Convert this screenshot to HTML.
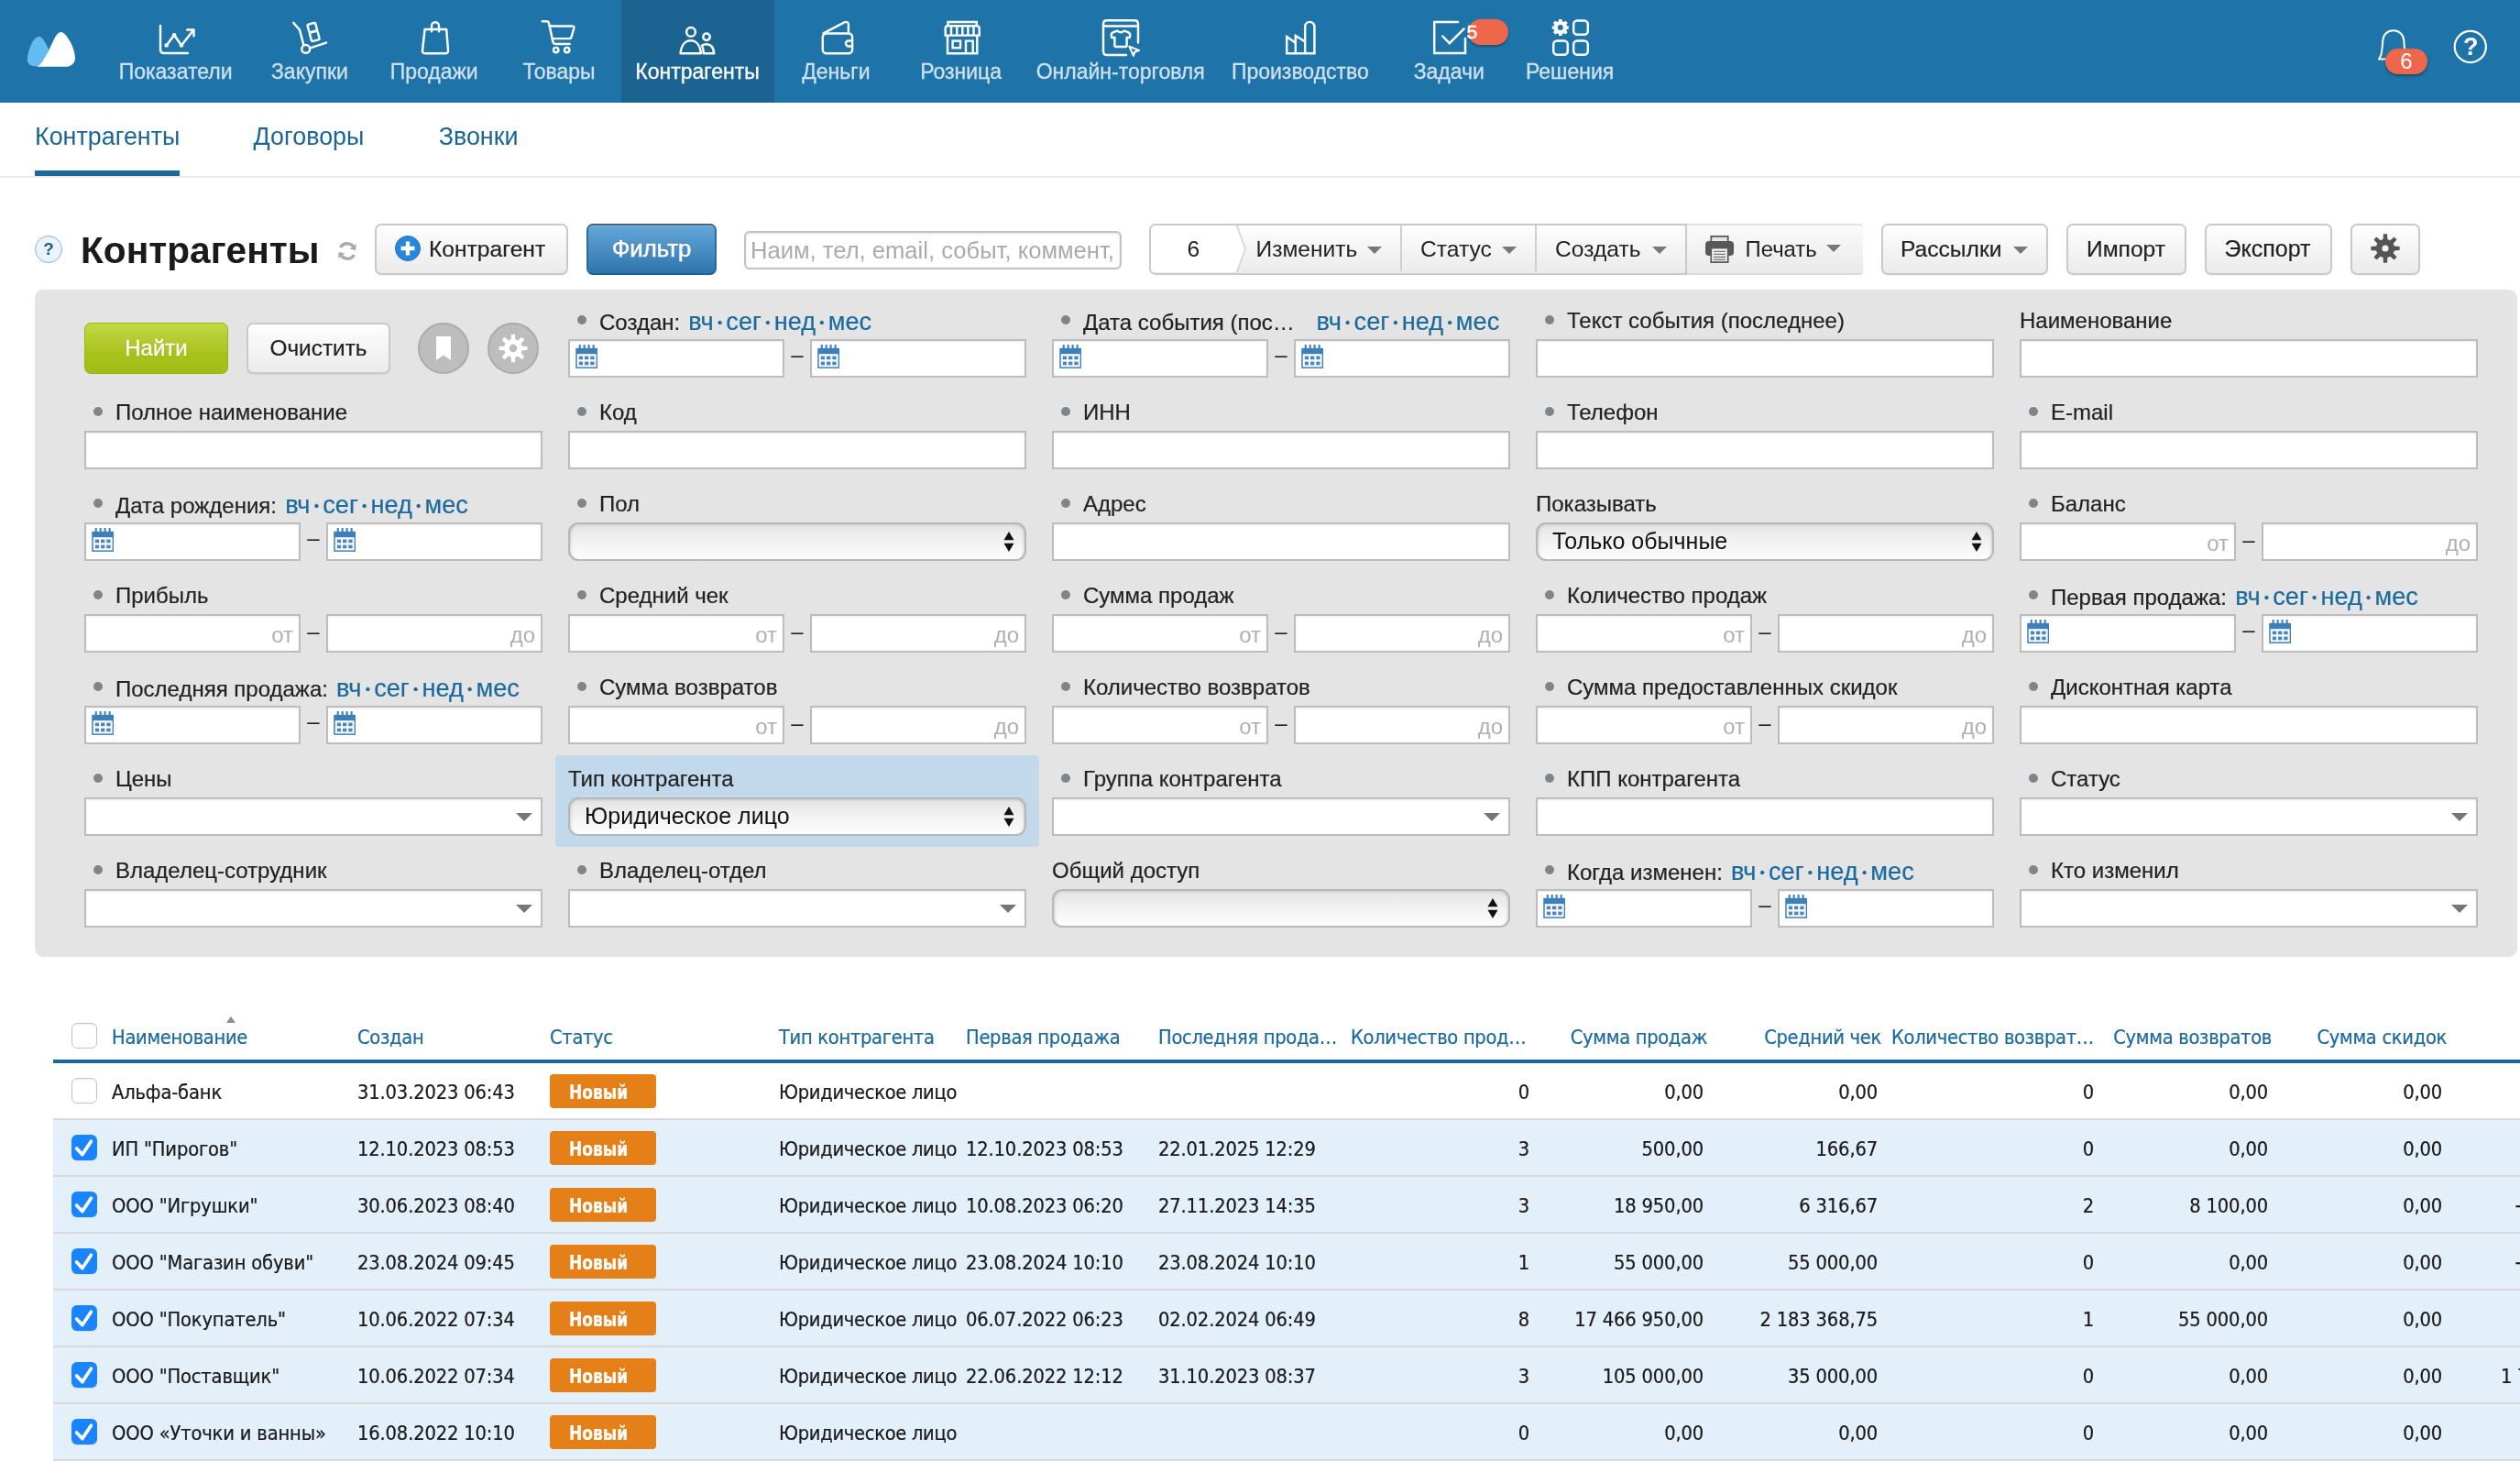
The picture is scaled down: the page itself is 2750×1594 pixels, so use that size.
<!DOCTYPE html><html lang="ru"><head><meta charset="utf-8"><title>Контрагенты</title><style>
html,body{margin:0;padding:0}
body{width:2750px;height:1594px;overflow:hidden;position:relative;background:#fff;font-family:"Liberation Sans","DejaVu Sans",sans-serif;color:#222;-webkit-font-smoothing:antialiased}
div,span,a{box-sizing:border-box}
#pg{position:absolute;left:0;top:0;width:2750px;height:1594px;overflow:hidden;will-change:transform}
.a{position:absolute;white-space:nowrap}
#nav{left:0;top:0;width:2750px;height:112px;background:#1e74a8}
.ni{position:absolute;top:0;height:112px}
.nl{position:absolute;top:63.7px;font-size:23px;line-height:28px;color:#cfe1ee;-webkit-text-stroke:.3px #cfe1ee;transform:translateX(-50%);white-space:nowrap}
.nl.act{color:#fff;-webkit-text-stroke:.3px #fff}
.ic{position:absolute;fill:none;stroke:#fff;stroke-width:2.6;stroke-linecap:round;stroke-linejoin:round;overflow:visible}
.sub{position:absolute;top:131.7px;font-size:26.9px;line-height:34px;color:#1b6595;white-space:nowrap}
.btn{position:absolute;-webkit-text-stroke:.2px;border:2px solid #c9c9c9;border-radius:7px;background:linear-gradient(#fefefe,#ebebeb);font-size:24.6px;color:#222;white-space:nowrap;box-shadow:0 1px 1px rgba(0,0,0,.05)}
.btn span.t{position:absolute;top:0;line-height:51px}
.car{position:absolute;width:0;height:0;border-left:8px solid transparent;border-right:8px solid transparent;border-top:8px solid #777}
#flt{left:38px;top:316px;width:2709px;height:728px;background:#e4e4e4;border-radius:9px}
.in{position:absolute;height:42px;background:#fff;border:2px solid #bdbdbd;box-shadow:inset 0 1px 2px rgba(0,0,0,.08)}
.lb{position:absolute;font-size:24px;line-height:30px;color:#222;white-space:nowrap;-webkit-text-stroke:.2px}
.bu{position:absolute;width:10px;height:10px;margin:0 0 0 .5px;border-radius:50%;background:#808588}
.sc{color:#1b6a9e;font-size:27.2px;line-height:30px;margin-left:2.5px}
.sc i{font-style:normal;font-size:15px;line-height:10px;position:relative;top:-3.5px;margin:0 4.2px}
.ph{position:absolute;font-size:24px;line-height:38px;color:#b0b0b0;top:2px}
.dash{position:absolute;font-size:24px;line-height:40px;color:#222;width:20px;text-align:center}
.sel{position:absolute;height:42px;border:2px solid #b7b7b7;border-radius:11px;background:linear-gradient(#e3e3e3,#f1f1f1 45%,#fdfdfd);box-shadow:inset 3px 0 3px -2px rgba(0,0,0,.14),inset -3px 0 3px -2px rgba(0,0,0,.14),inset 0 2px 2px rgba(0,0,0,.06);font-size:25px;line-height:37px;padding-left:16px;color:#111}
.cal{position:absolute;left:5.5px;top:3px}
.cmb{position:absolute;width:0;height:0;border-left:9px solid transparent;border-right:9px solid transparent;border-top:9px solid #777}
#tbl{font-family:"DejaVu Sans Condensed","DejaVu Sans","Liberation Sans",sans-serif;font-size:21.7px;letter-spacing:-0.3px;-webkit-text-stroke:.22px}
.th{position:absolute;top:1116.5px;line-height:30px;color:#1b6a9e;white-space:nowrap}
.td{position:absolute;line-height:30px;color:#1a1a1a;white-space:nowrap}
.r{transform:translateX(-100%)}
.n{letter-spacing:-0.14px}
.nm{letter-spacing:-0.15px}
.row{position:absolute;left:58px;width:2692px;height:62px;border-bottom:2px solid #d9d9d9}
.row.s{background:#e3f0fa}
.bd{position:absolute;left:600px;width:116px;height:37px;border-radius:4px;background:#e57f17;color:#fff;font-weight:bold;line-height:30px;font-size:21.7px;letter-spacing:0}
.bd span{position:absolute;left:20.5px;top:4.5px;display:inline-block;transform:scaleX(.875);transform-origin:0 0}
.cb{position:absolute;left:78px;width:28px;height:28px;border-radius:6px;border:1.5px solid #c4c4c4;background:#fff;box-shadow:inset 0 1px 2px rgba(0,0,0,.08)}
.cb.c{border:none;background:#1a85fa;box-shadow:0 1px 1px rgba(0,0,0,.08)}
</style></head><body><div id="pg">
<div id="nav" class="a">
<div class="a" style="left:678px;top:0;width:167px;height:112px;background:#1b6391"></div>
<span class="nl" style="left:191.6px">Показатели</span>
<span class="nl" style="left:337.9px">Закупки</span>
<span class="nl" style="left:473.7px">Продажи</span>
<span class="nl" style="left:610.0px">Товары</span>
<span class="nl act" style="left:761.0px">Контрагенты</span>
<span class="nl" style="left:912.4px">Деньги</span>
<span class="nl" style="left:1048.6px">Розница</span>
<span class="nl" style="left:1222.7px">Онлайн-торговля</span>
<span class="nl" style="left:1418.9px">Производство</span>
<span class="nl" style="left:1581.3px">Задачи</span>
<span class="nl" style="left:1713.1px">Решения</span>
<svg class="a" style="left:0;top:0" width="2750" height="112" viewBox="0 0 2750 112" fill="none" stroke="#fff" stroke-width="2.45" stroke-linecap="round" stroke-linejoin="round">
<g stroke="none">
<path fill="#62bbf3" d="M53.50 54.40 C53.12 53.67 52.00 51.48 51.20 50.00 C50.40 48.52 49.58 46.93 48.70 45.50 C47.82 44.07 46.88 42.32 45.90 41.40 C44.92 40.48 43.90 40.03 42.80 40.00 C41.70 39.97 40.36 40.48 39.30 41.20 C38.24 41.92 37.39 42.89 36.43 44.30 C35.47 45.71 34.49 47.38 33.55 49.64 C32.60 51.90 31.38 55.11 30.76 57.85 C30.15 60.59 29.94 64.43 29.86 66.07 C29.78 67.71 29.89 66.95 30.30 67.70 C30.71 68.45 31.42 69.88 32.30 70.60 C33.18 71.32 34.37 71.72 35.60 72.00 C36.83 72.28 38.47 72.53 39.70 72.30 C40.93 72.07 41.90 71.50 43.00 70.60 C44.10 69.70 45.35 68.20 46.30 66.90 C47.25 65.60 47.88 64.17 48.70 62.80 C49.52 61.43 50.40 60.10 51.20 58.70 C52.00 57.30 53.12 55.12 53.50 54.40 Z"/>
<path fill="#fff" d="M40.50 72.50 C40.92 72.18 42.03 71.53 43.00 70.60 C43.97 69.67 45.35 68.20 46.30 66.90 C47.25 65.60 47.88 64.17 48.70 62.80 C49.52 61.43 50.40 60.10 51.20 58.70 C52.00 57.30 52.75 55.92 53.50 54.40 C54.25 52.88 54.78 51.55 55.70 49.60 C56.62 47.65 57.97 44.62 59.00 42.70 C60.03 40.78 61.00 39.25 61.90 38.10 C62.80 36.95 63.62 36.30 64.40 35.80 C65.18 35.30 65.78 35.05 66.60 35.10 C67.42 35.15 68.30 35.38 69.30 36.10 C70.30 36.82 71.58 38.17 72.60 39.40 C73.62 40.63 74.45 41.93 75.40 43.50 C76.35 45.07 77.47 46.95 78.30 48.80 C79.13 50.65 79.85 52.75 80.40 54.60 C80.95 56.45 81.33 58.33 81.60 59.90 C81.87 61.47 82.13 62.63 82.00 64.00 C81.87 65.37 81.42 66.97 80.80 68.10 C80.18 69.23 79.33 70.08 78.30 70.80 C77.27 71.52 75.77 72.08 74.60 72.40 C73.43 72.72 71.85 72.65 71.30 72.70 L40.5 72.7 Z"/>
</g>
<!-- chart -->
<path d="M175 28V54Q175 58 179 58H205"/>
<path d="M181.7 49.5L190.1 38.2L198 49.5L211 33"/>
<path d="M204.3 32.4H211.5V39.2"/>
<g fill="#fff" stroke="none"><circle cx="181.7" cy="49.5" r="2.3"/><circle cx="190.1" cy="38.2" r="2.3"/><circle cx="198" cy="49.5" r="2.3"/></g>
<!-- trolley -->
<path d="M320.2 24.8L327 32.6L331.3 49"/>
<circle cx="333.7" cy="53.4" r="4.4"/>
<path d="M338.5 52.4L356 46.6"/>
<g transform="rotate(-15 342 35)"><rect x="337.6" y="25.5" width="9" height="9" rx="1.5"/><rect x="337.6" y="34.5" width="9" height="10" rx="1.5"/></g>
<!-- bag -->
<path d="M463.6 32H487.2L489 55Q489.2 58.3 486 58.3H464Q460.8 58.3 461 55Z"/>
<path d="M471 34.3V28.3A4 4 0 0 1 479 28.3V34.3"/>
<!-- cart -->
<path d="M591.8 23.3H596.5Q598.6 23.3 599 25.3L603.4 45.5Q604 48 606.5 48H621.7"/>
<path d="M599.8 28.4H624.3Q627 28.4 626.3 31L623.5 40.3Q623 42.1 621 42.1H602.8"/>
<circle cx="606.7" cy="54.6" r="2.7"/><circle cx="618.7" cy="54.6" r="2.7"/>
<!-- people -->
<circle cx="754" cy="34.9" r="4.9"/>
<path d="M742.6 58.2C743.5 49 748 44.3 753.8 44.3C759.6 44.3 764 49 764.9 58.2Z"/>
<circle cx="771" cy="40.2" r="3.7"/>
<path d="M767.7 58.2L767.6 56C767.4 53.5 766.8 51.3 765.9 49.7C767.3 48.8 769 48.3 771 48.3C775.5 48.3 778.6 52 779.3 58.2Z"/>
<!-- wallet -->
<rect x="897.8" y="36.5" width="32.3" height="21.8" rx="4"/>
<path d="M898.5 36.3L921.5 24.3Q925.8 22.8 925.9 27V36"/>
<path d="M930 44.4H926A3 3 0 0 0 926 50.4H930"/>
<!-- store -->
<g stroke-linecap="butt" stroke-linejoin="miter">
<path d="M1034.5 28.3V24H1065.8V28.3"/>
<path d="M1031.7 38.6V31Q1031.7 28.3 1034.5 28.3H1065.8Q1068.7 28.3 1068.7 31V38.6Z"/>
<path d="M1038 28.3V38.6M1044.2 28.3V38.6M1050.3 28.3V38.6M1056.4 28.3V38.6M1062.5 28.3V38.6"/>
<path d="M1034 38.6V58.2H1066.3V38.6"/>
<rect x="1039.6" y="44.6" width="8.4" height="7.6"/>
<path d="M1054 58.2V44.6H1061.7V58.2"/>
</g>
<!-- online -->
<path d="M1229 60H1208Q1204 60 1204 56V26.3Q1204 22.3 1208 22.3H1238Q1242 22.3 1242 26.3V46.5"/>
<path d="M1204 28.5H1242" stroke-linecap="butt"/>
<path d="M1219.3 33.6Q1223 37 1226.7 33.6L1231 35.2Q1233.6 36.4 1233.2 39L1232.8 41H1229.6V49.5Q1229.6 51 1228 51H1218Q1216.4 51 1216.4 49.5V41H1213.2L1212.8 39Q1212.4 36.4 1215 35.2Z"/>
<path d="M1232.3 50.6L1243 55L1238.2 56.8L1237 61Z" stroke-width="2"/>
<!-- factory -->
<g stroke-linecap="butt" stroke-linejoin="miter">
<path d="M1404.2 58.2V40L1413.8 46.8V39L1424.2 45.5"/>
<path d="M1413.8 46V58.2"/>
<path d="M1424.2 58.2V29A5.1 5.1 0 0 1 1434.4 29V58.2"/>
<path d="M1403 58.2H1435.6"/>
</g>
<!-- tasks -->
<path d="M1591 24H1565.2V58H1599V42" stroke-linejoin="miter"/>
<path d="M1574.2 39.5L1581.8 47.2L1597.6 31.3" stroke-linejoin="miter"/>
<!-- solutions -->
<rect x="1717.2" y="22.4" width="15.6" height="15.4" rx="4"/>
<rect x="1695.2" y="44.4" width="15.6" height="15.4" rx="4"/>
<rect x="1717.2" y="44.4" width="15.6" height="15.4" rx="4"/>
<g transform="translate(1702.8 30)" stroke="none" fill="#fff"><path fill-rule="evenodd" d="M-1.6 -9H1.6L2.2 -6.6L3.6 -6L5.8 -7.3L7.9 -5.1L6.5 -3L7 -1.7L9 -1.5V1.5L6.9 2L6.4 3.3L7.8 5.3L5.6 7.5L3.5 6.2L2.2 6.7L1.6 9H-1.6L-2.2 6.7L-3.5 6.2L-5.6 7.5L-7.8 5.3L-6.4 3.3L-6.9 2L-9 1.5V-1.5L-7 -1.7L-6.5 -3L-7.9 -5.1L-5.8 -7.3L-3.6 -6L-2.2 -6.6Z M0 -3A3 3 0 1 0 0 3A3 3 0 1 0 0 -3Z"/></g>
<!-- bell -->
<path d="M2596 64.6L2598 61C2599.5 56 2600 50 2600.3 44C2600.8 37.5 2605.5 33.2 2611.7 33.2C2618 33.2 2622.8 37.5 2623.3 44C2623.6 50 2624 56 2625.7 61L2627.5 64.6Z" stroke-width="2"/>
<!-- help -->
<circle cx="2695.8" cy="51" r="17.1" stroke-width="2.2"/>
</svg>
<div class="a" style="left:1602px;top:21px;width:44px;height:28px;border-radius:14px;background:#ee674a;box-shadow:0 2px 3px rgba(0,0,0,.3)"></div>
<span class="a" style="left:1600.5px;top:22px;font-size:21px;line-height:26px;color:#fff;-webkit-text-stroke:.6px #fff">5</span>
<div class="a" style="left:2603px;top:53px;width:46px;height:28px;border-radius:14px;background:#ee674a;box-shadow:0 2px 3px rgba(0,0,0,.35);color:#fff;font-size:24px;line-height:28px;text-align:center">6</div>
<span class="a" style="left:2688px;top:34px;font-size:27px;font-weight:bold;line-height:34px;color:#fff">?</span>

</div>
<span class="sub" style="left:38px">Контрагенты</span>
<span class="sub" style="left:276.5px">Договоры</span>
<span class="sub" style="left:478.7px">Звонки</span>
<div class="a" style="left:38px;top:186px;width:158px;height:6px;background:#1c6899"></div>
<div class="a" style="left:0;top:192px;width:2750px;height:2px;background:#e9e9e9"></div>
<div class="a" style="left:38px;top:257px;width:30px;height:30px;border-radius:50%;border:1.6px solid #7fb1d8;background:#eaf3fa;color:#1d5f94;font-size:19px;font-weight:bold;line-height:27px;text-align:center">?</div>
<div class="a" style="left:88px;top:249px;font-size:40.7px;font-weight:bold;line-height:48px;color:#1a1a1a">Контрагенты</div>
<svg class="a" style="left:367px;top:262px" width="24" height="24" viewBox="0 0 24 24" fill="none" stroke="#a9a9a9" stroke-width="3.4"><path d="M20 10 A8.5 8.5 0 0 0 4.5 8"/><path d="M4 14 A8.5 8.5 0 0 0 19.5 16"/><path d="M22 4 L21 11 L14.5 9.5Z" fill="#a9a9a9" stroke="none"/><path d="M2 20 L3 13 L9.5 14.5Z" fill="#a9a9a9" stroke="none"/></svg>
<div class="btn" style="left:409px;top:244px;width:211px;height:56px"><svg class="a" style="left:20px;top:11px" width="28" height="28" viewBox="0 0 30 30"><circle cx="15" cy="15" r="14.5" fill="#2a86d8"/><circle cx="15" cy="15" r="14.5" fill="none" stroke="#1f6fc0" stroke-width="1"/><path d="M15 7V23M7 15H23" stroke="#fff" stroke-width="4.6"/></svg><span class="t" style="left:57px">Контрагент</span></div>
<div class="a" style="left:640px;top:244px;width:142px;height:56px;border-radius:7px;border:2px solid;border-color:#4f6272 #2a6da3 #1d5f92;background:linear-gradient(#64a6d8,#4a8fc4 50%,#2d75ac);box-shadow:inset 0 1px 0 rgba(255,255,255,.2);color:#fff;font-size:25.8px;line-height:50px;text-align:center;-webkit-text-stroke:.5px #fff;text-shadow:0 -1px 1px rgba(0,0,0,.25)">Фильтр</div>
<div class="a" style="left:812px;top:252px;width:412px;height:42px;border:2px solid #c2c2c2;border-radius:6px;background:#fff;box-shadow:inset 0 1px 3px rgba(0,0,0,.12);overflow:hidden"><span class="a" style="left:5px;top:0;font-size:25.6px;line-height:39px;color:#aaa">Наим, тел, email, событ, коммент,</span></div>
<div class="a" style="left:1254px;top:244px;width:587px;height:56px;border:2px solid #c9c9c9;border-radius:7px 0 0 7px;background:linear-gradient(#fefefe,#ebebeb);overflow:hidden"><svg class="a" style="left:0;top:0" width="110" height="51" viewBox="0 0 110 51"><path d="M-2 -2H93L103 25.5L93 53H-2Z" fill="#fff" stroke="#d9d9d9" stroke-width="2"/></svg><span class="a" style="left:39.5px;top:0;font-size:24.6px;line-height:51px">6</span><span class="a" style="left:114.5px;top:0;font-size:24.6px;line-height:51px">Изменить</span><span class="car" style="left:236px;top:23px"></span><div class="a" style="left:272px;top:0;width:2px;height:50px;background:#cfcfcf"></div><span class="a" style="left:294px;top:0;font-size:24.6px;line-height:51px">Статус</span><span class="car" style="left:383px;top:23px"></span><div class="a" style="left:419px;top:0;width:2px;height:50px;background:#cfcfcf"></div><span class="a" style="left:441px;top:0;font-size:24.6px;line-height:51px">Создать</span><span class="car" style="left:547px;top:23px"></span></div>
<div class="a" style="left:1841px;top:244px;width:192px;height:56px;border-radius:0 4px 4px 0;background:linear-gradient(#fbfbfb,#e9e9e9);border-top:2px solid #e2e2e2;border-bottom:2px solid #dcdcdc"><svg class="a" style="left:20.3px;top:11px" width="31" height="30" viewBox="0 0 31 30"><rect x="6.3" y="0.9" width="18.4" height="8" fill="#e6e6e6" stroke="#5a5a5a" stroke-width="1.8"/><rect x="0" y="6" width="31" height="16" rx="4" fill="#585858"/><rect x="6.3" y="13.5" width="18.4" height="15.6" fill="#f2f2f2" stroke="#5a5a5a" stroke-width="1.8"/><path d="M9 17.3H22M9 20.4H22M9 23.5H22M9 26.4H22" stroke="#777" stroke-width="1.3"/></svg><span class="a" style="left:63.5px;top:0px;font-size:23.9px;line-height:51px">Печать</span><span class="car" style="left:152px;top:21px"></span></div>
<div class="btn" style="left:2053px;top:244px;width:182px;height:56px"><span class="t" style="left:19px">Рассылки</span><span class="car" style="left:142px;top:23px"></span></div>
<div class="btn" style="left:2255px;top:244px;width:131px;height:56px"><span class="t" style="left:20px">Импорт</span></div>
<div class="btn" style="left:2406px;top:244px;width:139px;height:56px"><span class="t" style="left:19.5px;font-size:25px">Экспорт</span></div>
<div class="btn" style="left:2565px;top:244px;width:76px;height:56px"><svg class="a" style="left:20px;top:9px" width="32" height="32" viewBox="-16 -16 32 32"><path fill="#555" fill-rule="evenodd" d="M-2.38 -9.92 L-2.10 -15.66 L2.10 -15.66 L2.38 -9.92 L5.33 -8.70 L9.59 -12.56 L12.56 -9.59 L8.70 -5.33 L9.92 -2.38 L15.66 -2.10 L15.66 2.10 L9.92 2.38 L8.70 5.33 L12.56 9.59 L9.59 12.56 L5.33 8.70 L2.38 9.92 L2.10 15.66 L-2.10 15.66 L-2.38 9.92 L-5.33 8.70 L-9.59 12.56 L-12.56 9.59 L-8.70 5.33 L-9.92 2.38 L-15.66 2.10 L-15.66 -2.10 L-9.92 -2.38 L-8.70 -5.33 L-12.56 -9.59 L-9.59 -12.56 L-5.33 -8.70Z M0 -3.60 A3.60 3.60 0 1 0 0 3.60 A3.60 3.60 0 1 0 0 -3.60 Z"/></svg></div>
<div id="flt" class="a">
<div class="a" style="left:568px;top:508px;width:528px;height:100px;background:#c1d9ea;border-radius:4px"></div>
<div class="a" style="left:54px;top:36px;width:157px;height:56px;border-radius:7px;border:1px solid #9ab51c;background:linear-gradient(#c3d845,#a8c21c 60%,#a3bd17);color:#fff;font-size:24px;line-height:54px;text-align:center;text-shadow:0 1px 1px rgba(0,0,0,.2);-webkit-text-stroke:.3px #fff">Найти</div>
<div class="btn" style="left:231px;top:36px;width:157px;height:56px"><span class="t" style="left:0;width:153px;text-align:center;line-height:52px;font-size:24.4px">Очистить</span></div>
<div class="a" style="left:418px;top:36px;width:56px;height:56px;border-radius:50%;background:#bdbdbd;border:2px solid #ababab"><svg class="a" style="left:18px;top:13px" width="16" height="26" viewBox="0 0 16 26"><path d="M0 0H16V26L8 20.4L0 26Z" fill="#fff"/></svg></div>
<div class="a" style="left:494px;top:36px;width:56px;height:56px;border-radius:50%;background:#bdbdbd;border:2px solid #ababab"><svg class="a" style="left:10px;top:10px" width="32" height="32" viewBox="-16 -16 32 32"><path fill="#fff" fill-rule="evenodd" d="M-2.33 -9.72 L-2.06 -15.36 L2.06 -15.36 L2.33 -9.72 L5.22 -8.53 L9.40 -12.32 L12.32 -9.40 L8.53 -5.22 L9.72 -2.33 L15.36 -2.06 L15.36 2.06 L9.72 2.33 L8.53 5.22 L12.32 9.40 L9.40 12.32 L5.22 8.53 L2.33 9.72 L2.06 15.36 L-2.06 15.36 L-2.33 9.72 L-5.22 8.53 L-9.40 12.32 L-12.32 9.40 L-8.53 5.22 L-9.72 2.33 L-15.36 2.06 L-15.36 -2.06 L-9.72 -2.33 L-8.53 -5.22 L-12.32 -9.40 L-9.40 -12.32 L-5.22 -8.53Z M0 -4.20 A4.20 4.20 0 1 0 0 4.20 A4.20 4.20 0 1 0 0 -4.20 Z"/></svg></div>
<span class="bu" style="left:591px;top:28px"></span>
<span class="lb" style="left:616px;top:20px">Создан: <span class="sc">вч<i>•</i>сег<i>•</i>нед<i>•</i>мес</span></span>
<div class="in" style="left:582px;top:54px;width:236px"><svg class="cal" width="24.4" height="28" viewBox="0 0 26 30"><rect x="1" y="6" width="24" height="22" fill="#fff" stroke="#3f7fb8" stroke-width="1.6"/><rect x="1" y="6" width="24" height="6" fill="#3f7fb8"/><path d="M5 1V8M10.3 1V8M15.6 1V8M21 1V8" stroke="#3f7fb8" stroke-width="2.2"/><g fill="#4a86bc"><rect x="4" y="14.5" width="4.6" height="4"/><rect x="10.7" y="14.5" width="4.6" height="4"/><rect x="17.4" y="14.5" width="4.6" height="4"/><rect x="4" y="21" width="4.6" height="4"/><rect x="10.7" y="21" width="4.6" height="4"/><rect x="17.4" y="21" width="4.6" height="4"/></g></svg></div>
<span class="dash" style="left:822px;top:50.7px">–</span>
<div class="in" style="left:846px;top:54px;width:236px"><svg class="cal" width="24.4" height="28" viewBox="0 0 26 30"><rect x="1" y="6" width="24" height="22" fill="#fff" stroke="#3f7fb8" stroke-width="1.6"/><rect x="1" y="6" width="24" height="6" fill="#3f7fb8"/><path d="M5 1V8M10.3 1V8M15.6 1V8M21 1V8" stroke="#3f7fb8" stroke-width="2.2"/><g fill="#4a86bc"><rect x="4" y="14.5" width="4.6" height="4"/><rect x="10.7" y="14.5" width="4.6" height="4"/><rect x="17.4" y="14.5" width="4.6" height="4"/><rect x="4" y="21" width="4.6" height="4"/><rect x="10.7" y="21" width="4.6" height="4"/><rect x="17.4" y="21" width="4.6" height="4"/></g></svg></div>
<span class="bu" style="left:1119px;top:28px"></span>
<span class="lb" style="left:1144px;top:21px">Дата события (пос…</span>
<span class="lb" style="left:1396px;top:20px"><span class="sc">вч<i>•</i>сег<i>•</i>нед<i>•</i>мес</span></span>
<div class="in" style="left:1110px;top:54px;width:236px"><svg class="cal" width="24.4" height="28" viewBox="0 0 26 30"><rect x="1" y="6" width="24" height="22" fill="#fff" stroke="#3f7fb8" stroke-width="1.6"/><rect x="1" y="6" width="24" height="6" fill="#3f7fb8"/><path d="M5 1V8M10.3 1V8M15.6 1V8M21 1V8" stroke="#3f7fb8" stroke-width="2.2"/><g fill="#4a86bc"><rect x="4" y="14.5" width="4.6" height="4"/><rect x="10.7" y="14.5" width="4.6" height="4"/><rect x="17.4" y="14.5" width="4.6" height="4"/><rect x="4" y="21" width="4.6" height="4"/><rect x="10.7" y="21" width="4.6" height="4"/><rect x="17.4" y="21" width="4.6" height="4"/></g></svg></div>
<span class="dash" style="left:1350px;top:50.7px">–</span>
<div class="in" style="left:1374px;top:54px;width:236px"><svg class="cal" width="24.4" height="28" viewBox="0 0 26 30"><rect x="1" y="6" width="24" height="22" fill="#fff" stroke="#3f7fb8" stroke-width="1.6"/><rect x="1" y="6" width="24" height="6" fill="#3f7fb8"/><path d="M5 1V8M10.3 1V8M15.6 1V8M21 1V8" stroke="#3f7fb8" stroke-width="2.2"/><g fill="#4a86bc"><rect x="4" y="14.5" width="4.6" height="4"/><rect x="10.7" y="14.5" width="4.6" height="4"/><rect x="17.4" y="14.5" width="4.6" height="4"/><rect x="4" y="21" width="4.6" height="4"/><rect x="10.7" y="21" width="4.6" height="4"/><rect x="17.4" y="21" width="4.6" height="4"/></g></svg></div>
<span class="bu" style="left:1647px;top:28px"></span>
<span class="lb" style="left:1672px;top:19px">Текст события (последнее)</span>
<div class="in" style="left:1638px;top:54px;width:500px"></div>
<span class="lb" style="left:2166px;top:19px">Наименование</span>
<div class="in" style="left:2166px;top:54px;width:500px"></div>
<span class="bu" style="left:63px;top:128px"></span>
<span class="lb" style="left:88px;top:119px">Полное наименование</span>
<div class="in" style="left:54px;top:154px;width:500px"></div>
<span class="bu" style="left:591px;top:128px"></span>
<span class="lb" style="left:616px;top:119px">Код</span>
<div class="in" style="left:582px;top:154px;width:500px"></div>
<span class="bu" style="left:1119px;top:128px"></span>
<span class="lb" style="left:1144px;top:119px">ИНН</span>
<div class="in" style="left:1110px;top:154px;width:500px"></div>
<span class="bu" style="left:1647px;top:128px"></span>
<span class="lb" style="left:1672px;top:119px">Телефон</span>
<div class="in" style="left:1638px;top:154px;width:500px"></div>
<span class="bu" style="left:2175px;top:128px"></span>
<span class="lb" style="left:2200px;top:119px">E-mail</span>
<div class="in" style="left:2166px;top:154px;width:500px"></div>
<span class="bu" style="left:63px;top:228px"></span>
<span class="lb" style="left:88px;top:220px">Дата рождения: <span class="sc">вч<i>•</i>сег<i>•</i>нед<i>•</i>мес</span></span>
<div class="in" style="left:54px;top:254px;width:236px"><svg class="cal" width="24.4" height="28" viewBox="0 0 26 30"><rect x="1" y="6" width="24" height="22" fill="#fff" stroke="#3f7fb8" stroke-width="1.6"/><rect x="1" y="6" width="24" height="6" fill="#3f7fb8"/><path d="M5 1V8M10.3 1V8M15.6 1V8M21 1V8" stroke="#3f7fb8" stroke-width="2.2"/><g fill="#4a86bc"><rect x="4" y="14.5" width="4.6" height="4"/><rect x="10.7" y="14.5" width="4.6" height="4"/><rect x="17.4" y="14.5" width="4.6" height="4"/><rect x="4" y="21" width="4.6" height="4"/><rect x="10.7" y="21" width="4.6" height="4"/><rect x="17.4" y="21" width="4.6" height="4"/></g></svg></div>
<span class="dash" style="left:294px;top:250.7px">–</span>
<div class="in" style="left:318px;top:254px;width:236px"><svg class="cal" width="24.4" height="28" viewBox="0 0 26 30"><rect x="1" y="6" width="24" height="22" fill="#fff" stroke="#3f7fb8" stroke-width="1.6"/><rect x="1" y="6" width="24" height="6" fill="#3f7fb8"/><path d="M5 1V8M10.3 1V8M15.6 1V8M21 1V8" stroke="#3f7fb8" stroke-width="2.2"/><g fill="#4a86bc"><rect x="4" y="14.5" width="4.6" height="4"/><rect x="10.7" y="14.5" width="4.6" height="4"/><rect x="17.4" y="14.5" width="4.6" height="4"/><rect x="4" y="21" width="4.6" height="4"/><rect x="10.7" y="21" width="4.6" height="4"/><rect x="17.4" y="21" width="4.6" height="4"/></g></svg></div>
<span class="bu" style="left:591px;top:228px"></span>
<span class="lb" style="left:616px;top:219px">Пол</span>
<div class="sel" style="left:582px;top:254px;width:500px"><svg class="a" style="right:11px;top:8px" width="12" height="22" viewBox="0 0 12 22"><path d="M6 0L11.5 9.3H.5Z M6 22L11.5 12.7H.5Z" fill="#111"/></svg></div>
<span class="bu" style="left:1119px;top:228px"></span>
<span class="lb" style="left:1144px;top:219px">Адрес</span>
<div class="in" style="left:1110px;top:254px;width:500px"></div>
<span class="lb" style="left:1638px;top:219px">Показывать</span>
<div class="sel" style="left:1638px;top:254px;width:500px">Только обычные<svg class="a" style="right:11px;top:8px" width="12" height="22" viewBox="0 0 12 22"><path d="M6 0L11.5 9.3H.5Z M6 22L11.5 12.7H.5Z" fill="#111"/></svg></div>
<span class="bu" style="left:2175px;top:228px"></span>
<span class="lb" style="left:2200px;top:219px">Баланс</span>
<div class="in" style="left:2166px;top:254px;width:236px"><span class="ph" style="right:6px">от</span></div>
<span class="dash" style="left:2406px;top:253.0px">–</span>
<div class="in" style="left:2430px;top:254px;width:236px"><span class="ph" style="right:6px">до</span></div>
<span class="bu" style="left:63px;top:328px"></span>
<span class="lb" style="left:88px;top:319px">Прибыль</span>
<div class="in" style="left:54px;top:354px;width:236px"><span class="ph" style="right:6px">от</span></div>
<span class="dash" style="left:294px;top:353.0px">–</span>
<div class="in" style="left:318px;top:354px;width:236px"><span class="ph" style="right:6px">до</span></div>
<span class="bu" style="left:591px;top:328px"></span>
<span class="lb" style="left:616px;top:319px">Средний чек</span>
<div class="in" style="left:582px;top:354px;width:236px"><span class="ph" style="right:6px">от</span></div>
<span class="dash" style="left:822px;top:353.0px">–</span>
<div class="in" style="left:846px;top:354px;width:236px"><span class="ph" style="right:6px">до</span></div>
<span class="bu" style="left:1119px;top:328px"></span>
<span class="lb" style="left:1144px;top:319px">Сумма продаж</span>
<div class="in" style="left:1110px;top:354px;width:236px"><span class="ph" style="right:6px">от</span></div>
<span class="dash" style="left:1350px;top:353.0px">–</span>
<div class="in" style="left:1374px;top:354px;width:236px"><span class="ph" style="right:6px">до</span></div>
<span class="bu" style="left:1647px;top:328px"></span>
<span class="lb" style="left:1672px;top:319px">Количество продаж</span>
<div class="in" style="left:1638px;top:354px;width:236px"><span class="ph" style="right:6px">от</span></div>
<span class="dash" style="left:1878px;top:353.0px">–</span>
<div class="in" style="left:1902px;top:354px;width:236px"><span class="ph" style="right:6px">до</span></div>
<span class="bu" style="left:2175px;top:328px"></span>
<span class="lb" style="left:2200px;top:320px">Первая продажа: <span class="sc">вч<i>•</i>сег<i>•</i>нед<i>•</i>мес</span></span>
<div class="in" style="left:2166px;top:354px;width:236px"><svg class="cal" width="24.4" height="28" viewBox="0 0 26 30"><rect x="1" y="6" width="24" height="22" fill="#fff" stroke="#3f7fb8" stroke-width="1.6"/><rect x="1" y="6" width="24" height="6" fill="#3f7fb8"/><path d="M5 1V8M10.3 1V8M15.6 1V8M21 1V8" stroke="#3f7fb8" stroke-width="2.2"/><g fill="#4a86bc"><rect x="4" y="14.5" width="4.6" height="4"/><rect x="10.7" y="14.5" width="4.6" height="4"/><rect x="17.4" y="14.5" width="4.6" height="4"/><rect x="4" y="21" width="4.6" height="4"/><rect x="10.7" y="21" width="4.6" height="4"/><rect x="17.4" y="21" width="4.6" height="4"/></g></svg></div>
<span class="dash" style="left:2406px;top:350.7px">–</span>
<div class="in" style="left:2430px;top:354px;width:236px"><svg class="cal" width="24.4" height="28" viewBox="0 0 26 30"><rect x="1" y="6" width="24" height="22" fill="#fff" stroke="#3f7fb8" stroke-width="1.6"/><rect x="1" y="6" width="24" height="6" fill="#3f7fb8"/><path d="M5 1V8M10.3 1V8M15.6 1V8M21 1V8" stroke="#3f7fb8" stroke-width="2.2"/><g fill="#4a86bc"><rect x="4" y="14.5" width="4.6" height="4"/><rect x="10.7" y="14.5" width="4.6" height="4"/><rect x="17.4" y="14.5" width="4.6" height="4"/><rect x="4" y="21" width="4.6" height="4"/><rect x="10.7" y="21" width="4.6" height="4"/><rect x="17.4" y="21" width="4.6" height="4"/></g></svg></div>
<span class="bu" style="left:63px;top:428px"></span>
<span class="lb" style="left:88px;top:420px">Последняя продажа: <span class="sc">вч<i>•</i>сег<i>•</i>нед<i>•</i>мес</span></span>
<div class="in" style="left:54px;top:454px;width:236px"><svg class="cal" width="24.4" height="28" viewBox="0 0 26 30"><rect x="1" y="6" width="24" height="22" fill="#fff" stroke="#3f7fb8" stroke-width="1.6"/><rect x="1" y="6" width="24" height="6" fill="#3f7fb8"/><path d="M5 1V8M10.3 1V8M15.6 1V8M21 1V8" stroke="#3f7fb8" stroke-width="2.2"/><g fill="#4a86bc"><rect x="4" y="14.5" width="4.6" height="4"/><rect x="10.7" y="14.5" width="4.6" height="4"/><rect x="17.4" y="14.5" width="4.6" height="4"/><rect x="4" y="21" width="4.6" height="4"/><rect x="10.7" y="21" width="4.6" height="4"/><rect x="17.4" y="21" width="4.6" height="4"/></g></svg></div>
<span class="dash" style="left:294px;top:450.7px">–</span>
<div class="in" style="left:318px;top:454px;width:236px"><svg class="cal" width="24.4" height="28" viewBox="0 0 26 30"><rect x="1" y="6" width="24" height="22" fill="#fff" stroke="#3f7fb8" stroke-width="1.6"/><rect x="1" y="6" width="24" height="6" fill="#3f7fb8"/><path d="M5 1V8M10.3 1V8M15.6 1V8M21 1V8" stroke="#3f7fb8" stroke-width="2.2"/><g fill="#4a86bc"><rect x="4" y="14.5" width="4.6" height="4"/><rect x="10.7" y="14.5" width="4.6" height="4"/><rect x="17.4" y="14.5" width="4.6" height="4"/><rect x="4" y="21" width="4.6" height="4"/><rect x="10.7" y="21" width="4.6" height="4"/><rect x="17.4" y="21" width="4.6" height="4"/></g></svg></div>
<span class="bu" style="left:591px;top:428px"></span>
<span class="lb" style="left:616px;top:419px">Сумма возвратов</span>
<div class="in" style="left:582px;top:454px;width:236px"><span class="ph" style="right:6px">от</span></div>
<span class="dash" style="left:822px;top:453.0px">–</span>
<div class="in" style="left:846px;top:454px;width:236px"><span class="ph" style="right:6px">до</span></div>
<span class="bu" style="left:1119px;top:428px"></span>
<span class="lb" style="left:1144px;top:419px">Количество возвратов</span>
<div class="in" style="left:1110px;top:454px;width:236px"><span class="ph" style="right:6px">от</span></div>
<span class="dash" style="left:1350px;top:453.0px">–</span>
<div class="in" style="left:1374px;top:454px;width:236px"><span class="ph" style="right:6px">до</span></div>
<span class="bu" style="left:1647px;top:428px"></span>
<span class="lb" style="left:1672px;top:419px">Сумма предоставленных скидок</span>
<div class="in" style="left:1638px;top:454px;width:236px"><span class="ph" style="right:6px">от</span></div>
<span class="dash" style="left:1878px;top:453.0px">–</span>
<div class="in" style="left:1902px;top:454px;width:236px"><span class="ph" style="right:6px">до</span></div>
<span class="bu" style="left:2175px;top:428px"></span>
<span class="lb" style="left:2200px;top:419px">Дисконтная карта</span>
<div class="in" style="left:2166px;top:454px;width:500px"></div>
<span class="bu" style="left:63px;top:528px"></span>
<span class="lb" style="left:88px;top:519px">Цены</span>
<div class="in" style="left:54px;top:554px;width:500px"><span class="cmb" style="right:9px;top:15px"></span></div>
<span class="lb" style="left:582px;top:519px">Тип контрагента</span>
<div class="sel" style="left:582px;top:554px;width:500px">Юридическое лицо<svg class="a" style="right:11px;top:8px" width="12" height="22" viewBox="0 0 12 22"><path d="M6 0L11.5 9.3H.5Z M6 22L11.5 12.7H.5Z" fill="#111"/></svg></div>
<span class="bu" style="left:1119px;top:528px"></span>
<span class="lb" style="left:1144px;top:519px">Группа контрагента</span>
<div class="in" style="left:1110px;top:554px;width:500px"><span class="cmb" style="right:9px;top:15px"></span></div>
<span class="bu" style="left:1647px;top:528px"></span>
<span class="lb" style="left:1672px;top:519px">КПП контрагента</span>
<div class="in" style="left:1638px;top:554px;width:500px"></div>
<span class="bu" style="left:2175px;top:528px"></span>
<span class="lb" style="left:2200px;top:519px">Статус</span>
<div class="in" style="left:2166px;top:554px;width:500px"><span class="cmb" style="right:9px;top:15px"></span></div>
<span class="bu" style="left:63px;top:628px"></span>
<span class="lb" style="left:88px;top:619px">Владелец-сотрудник</span>
<div class="in" style="left:54px;top:654px;width:500px"><span class="cmb" style="right:9px;top:15px"></span></div>
<span class="bu" style="left:591px;top:628px"></span>
<span class="lb" style="left:616px;top:619px">Владелец-отдел</span>
<div class="in" style="left:582px;top:654px;width:500px"><span class="cmb" style="right:9px;top:15px"></span></div>
<span class="lb" style="left:1110px;top:619px">Общий доступ</span>
<div class="sel" style="left:1110px;top:654px;width:500px"><svg class="a" style="right:11px;top:8px" width="12" height="22" viewBox="0 0 12 22"><path d="M6 0L11.5 9.3H.5Z M6 22L11.5 12.7H.5Z" fill="#111"/></svg></div>
<span class="bu" style="left:1647px;top:628px"></span>
<span class="lb" style="left:1672px;top:620px">Когда изменен: <span class="sc">вч<i>•</i>сег<i>•</i>нед<i>•</i>мес</span></span>
<div class="in" style="left:1638px;top:654px;width:236px"><svg class="cal" width="24.4" height="28" viewBox="0 0 26 30"><rect x="1" y="6" width="24" height="22" fill="#fff" stroke="#3f7fb8" stroke-width="1.6"/><rect x="1" y="6" width="24" height="6" fill="#3f7fb8"/><path d="M5 1V8M10.3 1V8M15.6 1V8M21 1V8" stroke="#3f7fb8" stroke-width="2.2"/><g fill="#4a86bc"><rect x="4" y="14.5" width="4.6" height="4"/><rect x="10.7" y="14.5" width="4.6" height="4"/><rect x="17.4" y="14.5" width="4.6" height="4"/><rect x="4" y="21" width="4.6" height="4"/><rect x="10.7" y="21" width="4.6" height="4"/><rect x="17.4" y="21" width="4.6" height="4"/></g></svg></div>
<span class="dash" style="left:1878px;top:650.7px">–</span>
<div class="in" style="left:1902px;top:654px;width:236px"><svg class="cal" width="24.4" height="28" viewBox="0 0 26 30"><rect x="1" y="6" width="24" height="22" fill="#fff" stroke="#3f7fb8" stroke-width="1.6"/><rect x="1" y="6" width="24" height="6" fill="#3f7fb8"/><path d="M5 1V8M10.3 1V8M15.6 1V8M21 1V8" stroke="#3f7fb8" stroke-width="2.2"/><g fill="#4a86bc"><rect x="4" y="14.5" width="4.6" height="4"/><rect x="10.7" y="14.5" width="4.6" height="4"/><rect x="17.4" y="14.5" width="4.6" height="4"/><rect x="4" y="21" width="4.6" height="4"/><rect x="10.7" y="21" width="4.6" height="4"/><rect x="17.4" y="21" width="4.6" height="4"/></g></svg></div>
<span class="bu" style="left:2175px;top:628px"></span>
<span class="lb" style="left:2200px;top:619px">Кто изменил</span>
<div class="in" style="left:2166px;top:654px;width:500px"><span class="cmb" style="right:9px;top:15px"></span></div>
</div>
<div id="tbl">
<div class="cb" style="top:1116px"></div>
<div class="a" style="left:246.5px;top:1109px;width:0;height:0;border-left:5.5px solid transparent;border-right:5.5px solid transparent;border-bottom:7.5px solid #8a8e90"></div>
<span class="th" style="left:122px">Наименование</span>
<span class="th" style="left:390px">Создан</span>
<span class="th" style="left:600px">Статус</span>
<span class="th" style="left:850px">Тип контрагента</span>
<span class="th" style="left:1054px">Первая продажа</span>
<span class="th" style="left:1264px">Последняя прода…</span>
<span class="th" style="left:1474px">Количество прод…</span>
<span class="th r" style="left:1863px">Сумма продаж</span>
<span class="th r" style="left:2053px">Средний чек</span>
<span class="th" style="left:2064px">Количество возврат…</span>
<span class="th r" style="left:2479px">Сумма возвратов</span>
<span class="th r" style="left:2670px">Сумма скидок</span>
<div class="a" style="left:58px;top:1156px;width:2692px;height:4px;background:#1c6898"></div>
<div class="row" style="top:1160px"></div>
<div class="cb" style="top:1176px"></div>
<span class="td nm" style="left:122px;top:1176.5px">Альфа-банк</span>
<span class="td n" style="left:390px;top:1176.5px">31.03.2023 06:43</span>
<div class="bd" style="top:1172px"><span>Новый</span></div>
<span class="td" style="left:850px;top:1176.5px">Юридическое лицо</span>
<span class="td r n" style="left:1669px;top:1176.5px">0</span>
<span class="td r n" style="left:1859px;top:1176.5px">0,00</span>
<span class="td r n" style="left:2049px;top:1176.5px">0,00</span>
<span class="td r n" style="left:2285px;top:1176.5px">0</span>
<span class="td r n" style="left:2475px;top:1176.5px">0,00</span>
<span class="td r n" style="left:2665px;top:1176.5px">0,00</span>
<div class="row s" style="top:1222px"></div>
<div class="cb c" style="top:1238px"><svg class="a" style="left:0;top:0" width="28" height="28" viewBox="0 0 28 28"><path d="M5.6 15L11.9 21.6L21.4 7.2" fill="none" stroke="#fff" stroke-width="3.7" stroke-linecap="round" stroke-linejoin="round"/></svg></div>
<span class="td nm" style="left:122px;top:1238.5px">ИП "Пирогов"</span>
<span class="td n" style="left:390px;top:1238.5px">12.10.2023 08:53</span>
<div class="bd" style="top:1234px"><span>Новый</span></div>
<span class="td" style="left:850px;top:1238.5px">Юридическое лицо</span>
<span class="td n" style="left:1054px;top:1238.5px">12.10.2023 08:53</span>
<span class="td n" style="left:1264px;top:1238.5px">22.01.2025 12:29</span>
<span class="td r n" style="left:1669px;top:1238.5px">3</span>
<span class="td r n" style="left:1859px;top:1238.5px">500,00</span>
<span class="td r n" style="left:2049px;top:1238.5px">166,67</span>
<span class="td r n" style="left:2285px;top:1238.5px">0</span>
<span class="td r n" style="left:2475px;top:1238.5px">0,00</span>
<span class="td r n" style="left:2665px;top:1238.5px">0,00</span>
<div class="row s" style="top:1284px"></div>
<div class="cb c" style="top:1300px"><svg class="a" style="left:0;top:0" width="28" height="28" viewBox="0 0 28 28"><path d="M5.6 15L11.9 21.6L21.4 7.2" fill="none" stroke="#fff" stroke-width="3.7" stroke-linecap="round" stroke-linejoin="round"/></svg></div>
<span class="td nm" style="left:122px;top:1300.5px">ООО "Игрушки"</span>
<span class="td n" style="left:390px;top:1300.5px">30.06.2023 08:40</span>
<div class="bd" style="top:1296px"><span>Новый</span></div>
<span class="td" style="left:850px;top:1300.5px">Юридическое лицо</span>
<span class="td n" style="left:1054px;top:1300.5px">10.08.2023 06:20</span>
<span class="td n" style="left:1264px;top:1300.5px">27.11.2023 14:35</span>
<span class="td r n" style="left:1669px;top:1300.5px">3</span>
<span class="td r n" style="left:1859px;top:1300.5px">18 950,00</span>
<span class="td r n" style="left:2049px;top:1300.5px">6 316,67</span>
<span class="td r n" style="left:2285px;top:1300.5px">2</span>
<span class="td r n" style="left:2475px;top:1300.5px">8 100,00</span>
<span class="td r n" style="left:2665px;top:1300.5px">0,00</span>
<span class="td" style="left:2743.5px;top:1300.5px">−</span>
<div class="row s" style="top:1346px"></div>
<div class="cb c" style="top:1362px"><svg class="a" style="left:0;top:0" width="28" height="28" viewBox="0 0 28 28"><path d="M5.6 15L11.9 21.6L21.4 7.2" fill="none" stroke="#fff" stroke-width="3.7" stroke-linecap="round" stroke-linejoin="round"/></svg></div>
<span class="td nm" style="left:122px;top:1362.5px">ООО "Магазин обуви"</span>
<span class="td n" style="left:390px;top:1362.5px">23.08.2024 09:45</span>
<div class="bd" style="top:1358px"><span>Новый</span></div>
<span class="td" style="left:850px;top:1362.5px">Юридическое лицо</span>
<span class="td n" style="left:1054px;top:1362.5px">23.08.2024 10:10</span>
<span class="td n" style="left:1264px;top:1362.5px">23.08.2024 10:10</span>
<span class="td r n" style="left:1669px;top:1362.5px">1</span>
<span class="td r n" style="left:1859px;top:1362.5px">55 000,00</span>
<span class="td r n" style="left:2049px;top:1362.5px">55 000,00</span>
<span class="td r n" style="left:2285px;top:1362.5px">0</span>
<span class="td r n" style="left:2475px;top:1362.5px">0,00</span>
<span class="td r n" style="left:2665px;top:1362.5px">0,00</span>
<span class="td" style="left:2743.5px;top:1362.5px">−</span>
<div class="row s" style="top:1408px"></div>
<div class="cb c" style="top:1424px"><svg class="a" style="left:0;top:0" width="28" height="28" viewBox="0 0 28 28"><path d="M5.6 15L11.9 21.6L21.4 7.2" fill="none" stroke="#fff" stroke-width="3.7" stroke-linecap="round" stroke-linejoin="round"/></svg></div>
<span class="td nm" style="left:122px;top:1424.5px">ООО "Покупатель"</span>
<span class="td n" style="left:390px;top:1424.5px">10.06.2022 07:34</span>
<div class="bd" style="top:1420px"><span>Новый</span></div>
<span class="td" style="left:850px;top:1424.5px">Юридическое лицо</span>
<span class="td n" style="left:1054px;top:1424.5px">06.07.2022 06:23</span>
<span class="td n" style="left:1264px;top:1424.5px">02.02.2024 06:49</span>
<span class="td r n" style="left:1669px;top:1424.5px">8</span>
<span class="td r n" style="left:1859px;top:1424.5px">17 466 950,00</span>
<span class="td r n" style="left:2049px;top:1424.5px">2 183 368,75</span>
<span class="td r n" style="left:2285px;top:1424.5px">1</span>
<span class="td r n" style="left:2475px;top:1424.5px">55 000,00</span>
<span class="td r n" style="left:2665px;top:1424.5px">0,00</span>
<div class="row s" style="top:1470px"></div>
<div class="cb c" style="top:1486px"><svg class="a" style="left:0;top:0" width="28" height="28" viewBox="0 0 28 28"><path d="M5.6 15L11.9 21.6L21.4 7.2" fill="none" stroke="#fff" stroke-width="3.7" stroke-linecap="round" stroke-linejoin="round"/></svg></div>
<span class="td nm" style="left:122px;top:1486.5px">ООО "Поставщик"</span>
<span class="td n" style="left:390px;top:1486.5px">10.06.2022 07:34</span>
<div class="bd" style="top:1482px"><span>Новый</span></div>
<span class="td" style="left:850px;top:1486.5px">Юридическое лицо</span>
<span class="td n" style="left:1054px;top:1486.5px">22.06.2022 12:12</span>
<span class="td n" style="left:1264px;top:1486.5px">31.10.2023 08:37</span>
<span class="td r n" style="left:1669px;top:1486.5px">3</span>
<span class="td r n" style="left:1859px;top:1486.5px">105 000,00</span>
<span class="td r n" style="left:2049px;top:1486.5px">35 000,00</span>
<span class="td r n" style="left:2285px;top:1486.5px">0</span>
<span class="td r n" style="left:2475px;top:1486.5px">0,00</span>
<span class="td r n" style="left:2665px;top:1486.5px">0,00</span>
<span class="td" style="left:2729.0px;top:1486.5px">1 7</span>
<div class="row s" style="top:1532px"></div>
<div class="cb c" style="top:1548px"><svg class="a" style="left:0;top:0" width="28" height="28" viewBox="0 0 28 28"><path d="M5.6 15L11.9 21.6L21.4 7.2" fill="none" stroke="#fff" stroke-width="3.7" stroke-linecap="round" stroke-linejoin="round"/></svg></div>
<span class="td nm" style="left:122px;top:1548.5px">ООО «Уточки и ванны»</span>
<span class="td n" style="left:390px;top:1548.5px">16.08.2022 10:10</span>
<div class="bd" style="top:1544px"><span>Новый</span></div>
<span class="td" style="left:850px;top:1548.5px">Юридическое лицо</span>
<span class="td r n" style="left:1669px;top:1548.5px">0</span>
<span class="td r n" style="left:1859px;top:1548.5px">0,00</span>
<span class="td r n" style="left:2049px;top:1548.5px">0,00</span>
<span class="td r n" style="left:2285px;top:1548.5px">0</span>
<span class="td r n" style="left:2475px;top:1548.5px">0,00</span>
<span class="td r n" style="left:2665px;top:1548.5px">0,00</span>
</div>
</div></body></html>
